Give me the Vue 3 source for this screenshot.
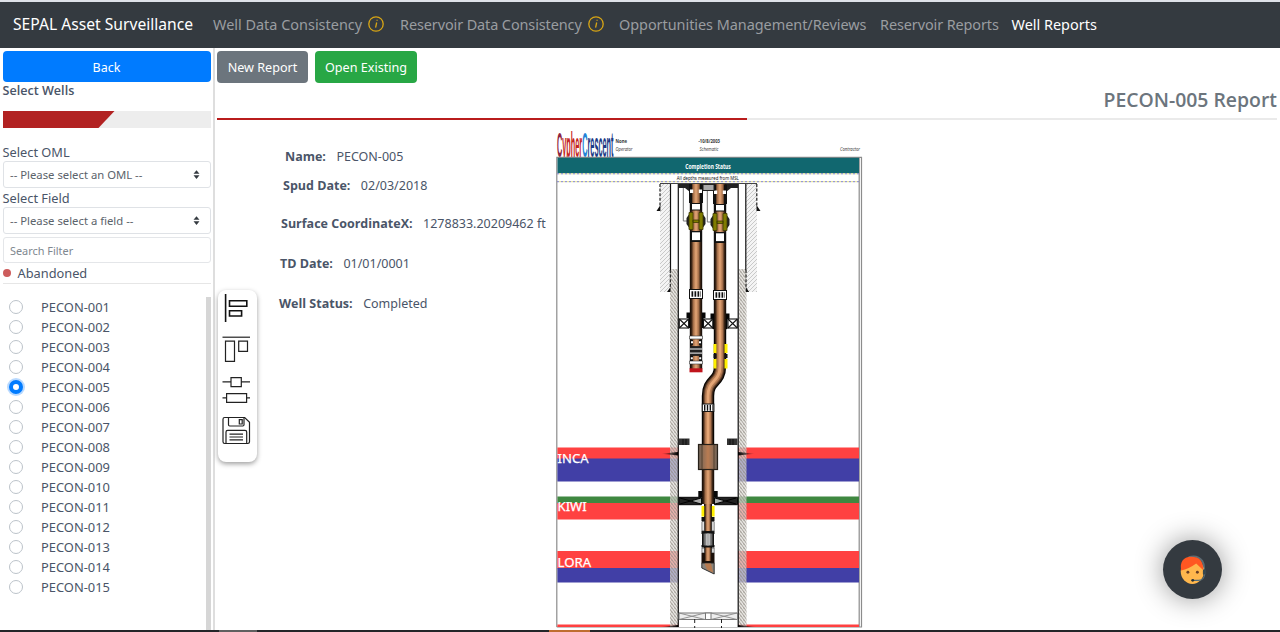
<script setup>
const wells = Array.from({ length: 15 }, (_, i) => 'PECON-' + String(i + 1).padStart(3, '0'))
const selected = 'PECON-005'
const details = [
  { k: 'name', label: 'Name:', value: 'PECON-005' },
  { k: 'spud', label: 'Spud Date:', value: '02/03/2018' },
  { k: 'coord', label: 'Surface CoordinateX:', value: '1278833.20209462 ft' },
  { k: 'td', label: 'TD Date:', value: '01/01/0001' },
  { k: 'status', label: 'Well Status:', value: 'Completed' }
]
const bands = [
  { y: 447.5, h: 11.5, c: '#ff4141' },
  { y: 458.5, h: 23, c: '#413fa6' },
  { y: 496.5, h: 7, c: '#3f8840' },
  { y: 503, h: 16.5, c: '#ff4141' },
  { y: 551, h: 17.5, c: '#ff4141' },
  { y: 568, h: 14.5, c: '#413fa6' },
  { y: 624.5, h: 2.5, c: '#ff4141' }
]
const crossBoxes = [679.3, 703.5, 728]
const strings = [{ x: 696, dy: 0 }, { x: 720, dy: 1 }]
</script>

<template>
  <div class="page">
    <nav class="nav">
      <span class="brand">SEPAL Asset Surveillance</span>
      <span class="link l1">Well Data Consistency</span>
      <svg class="info" viewBox="0 0 16 16"><circle cx="8" cy="8" r="7.2" /><path d="M8.7 6.5 7.6 11.6" /><path d="M9.1 3.8v1" /></svg>
      <span class="link l2">Reservoir Data Consistency</span>
      <svg class="info" viewBox="0 0 16 16"><circle cx="8" cy="8" r="7.2" /><path d="M8.7 6.5 7.6 11.6" /><path d="M9.1 3.8v1" /></svg>
      <span class="link l3">Opportunities Management/Reviews</span>
      <span class="link l4">Reservoir Reports</span>
      <span class="link active">Well Reports</span>
    </nav>

    <div class="body">
      <aside class="side">
        <button class="back">Back</button>
        <div class="heading">Select Wells</div>
        <div class="bar"><div class="fill"></div></div>
        <label class="lbl">Select OML</label>
        <div class="select">-- Please select an OML --
          <svg viewBox="0 0 8 10"><path d="M4 0 7.4 4.2H.6zM4 10 .6 5.8h6.8z" /></svg>
        </div>
        <label class="lbl two">Select Field</label>
        <div class="select">-- Please select a field --
          <svg viewBox="0 0 8 10"><path d="M4 0 7.4 4.2H.6zM4 10 .6 5.8h6.8z" /></svg>
        </div>
        <div class="search">Search Filter</div>
        <div class="legend"><i></i>Abandoned</div>
        <div class="list">
          <div v-for="w in wells" :key="w" class="well">
            <span class="radio" :class="{ on: w === selected }"></span>{{ w }}
          </div>
        </div>
      </aside>

      <main class="main">
        <div class="buttons">
          <button class="btn gray">New Report</button>
          <button class="btn green">Open Existing</button>
        </div>
        <h1 class="title">PECON-005 Report</h1>
        <div class="rule"><div></div></div>
        <div class="report">
          <div class="details">
            <div v-for="d in details" :key="d.k" class="row" :class="d.k">
              <b>{{ d.label }}</b><span>{{ d.value }}</span>
            </div>
          </div>

          <svg class="schematic" viewBox="555 128 308 501">
            <defs>
              <linearGradient id="pipe" x1="0" x2="1" y1="0" y2="0">
                <stop offset="0" stop-color="#0c0704" /><stop offset=".14" stop-color="#3a2415" />
                <stop offset=".3" stop-color="#a8724c" /><stop offset=".5" stop-color="#e5a676" />
                <stop offset=".7" stop-color="#a8724c" /><stop offset=".86" stop-color="#3a2415" />
                <stop offset="1" stop-color="#0c0704" />
              </linearGradient>
              <linearGradient id="steel" x1="0" x2="1" y1="0" y2="0">
                <stop offset="0" stop-color="#000" /><stop offset=".25" stop-color="#777" />
                <stop offset=".5" stop-color="#fff" /><stop offset=".75" stop-color="#777" />
                <stop offset="1" stop-color="#000" />
              </linearGradient>
              <linearGradient id="block" x1="0" x2="1" y1="0" y2="0">
                <stop offset="0" stop-color="#6d6258" /><stop offset=".5" stop-color="#b97c52" />
                <stop offset="1" stop-color="#6d6258" />
              </linearGradient>
              <linearGradient id="spikeL"><stop offset="0" stop-color="#000" stop-opacity="0" /><stop offset="1" stop-color="#000" /></linearGradient>
              <linearGradient id="spikeR"><stop offset="0" stop-color="#000" /><stop offset="1" stop-color="#000" stop-opacity="0" /></linearGradient>
              <pattern id="cement" width="4" height="4" patternUnits="userSpaceOnUse">
                <rect width="4" height="4" fill="#f4f4f4" />
                <path d="M-1 5 5-1M-1 1 1-1M3 5 5 3" stroke="#c4c4c4" stroke-width=".9" />
              </pattern>
              <pattern id="cement2" width="3" height="4" patternUnits="userSpaceOnUse">
                <rect width="3" height="4" fill="#dedbd6" fill-opacity=".72" />
                <path d="M0 0 3 4M-1 2.5 1 5M2 -1 4 2" stroke="#918b84" stroke-width=".8" />
              </pattern>
            </defs>

            <text x="557" y="157" class="logo" textLength="56.5" lengthAdjust="spacingAndGlyphs"><tspan fill="#8e2440">C</tspan><tspan fill="#c4261d">ypher</tspan><tspan fill="#2383d6">C</tspan><tspan fill="#1c3a86">rescent</tspan></text>
            <text x="615.5" y="142.5" class="strong" textLength="11.5" lengthAdjust="spacingAndGlyphs">None</text>
            <text x="615.5" y="151" class="em" textLength="17" lengthAdjust="spacingAndGlyphs">Operator</text>
            <text x="698.5" y="142.5" class="strong" textLength="21.5" lengthAdjust="spacingAndGlyphs">-10/8/2003</text>
            <text x="699.5" y="151" class="em" textLength="19" lengthAdjust="spacingAndGlyphs">Schematic</text>
            <text x="840" y="151" class="em" textLength="20" lengthAdjust="spacingAndGlyphs">Contractor</text>

            <rect x="557" y="157.8" width="302" height="25" fill="#fff" />
            <path d="M556.8 627V157.3H861.5V627H556.8M859.2 158V627" fill="none" stroke="#8c8c8c" stroke-width="1.2" />
            <rect x="557.5" y="157.8" width="301.5" height="15.4" fill="#11676f" />
            <g fill="none" stroke-width="1">
              <path d="M557 173.8H859M557 181.7H859" stroke="#8080c8" stroke-dasharray="2 2" />
              <path d="M559 173.8H859M559 181.7H859" stroke="#e4e48c" stroke-dasharray="2 2" />
            </g>
            <text x="685.3" y="168.6" font-size="6.4" font-weight="700" fill="#fff" textLength="45.5" lengthAdjust="spacingAndGlyphs">Completion Status</text>
            <text x="676.8" y="180.4" font-size="5.8" fill="#111" textLength="62" lengthAdjust="spacingAndGlyphs">All depths measured from MSL</text>

            <rect v-for="b in bands" :key="b.y" x="557.4" :y="b.y" width="301.6" :height="b.h" :fill="b.c" />
            <rect x="678.5" y="183" width="59.5" height="444" fill="#fff" />
            <g class="zone">
              <text x="557.6" y="462.8" textLength="31" lengthAdjust="spacingAndGlyphs">INCA</text>
              <text x="557.6" y="511.3" textLength="29" lengthAdjust="spacingAndGlyphs">KIWI</text>
              <text x="557.6" y="566.8" textLength="33.5" lengthAdjust="spacingAndGlyphs">LORA</text>
            </g>

            <!-- casing strings and cement -->
            <path d="M660 184H670V292H660zM746 184H757V292H746z" fill="url(#cement)" />
            <path d="M670 269H678V627H670zM738.5 269H746.5V627H738.5z" fill="url(#cement2)" />
            <path d="M660 183.5H757" stroke="#444" stroke-width="1.2" fill="none" />
            <path d="M660 184V206M756.8 184V206M670.3 270V288M746 270V288" stroke="#222" stroke-width="1.2" stroke-dasharray="3 1.6" fill="none" />
            <path d="M670.5 184V270M745.8 184V270M678.3 184V627M738.2 184V627" stroke="#111" stroke-width="1.2" fill="none" />
            <path d="M660.4 205V211H656.5zM756.5 205V211H760.5zM670.5 287V292H667zM745.8 287V292H749.2z" fill="#111" />
            <path d="M661 453.8 678 452V455.5z" fill="url(#spikeL)" /><path d="M755 453.8 738 452V455.5z" fill="url(#spikeR)" />
            <path d="M660 627H678V625z" fill="url(#spikeL)" /><path d="M757 627H738V625z" fill="url(#spikeR)" />

            <!-- hanger -->
            <path d="M678 184H690V192L685 188H678zM726 184H738V188H731L726 192z" fill="#222" />
            <path d="M683.3 188V221H687M707.3 191V222H712" fill="none" stroke="#777" />

            <!-- tubing -->
            <g fill="none" stroke-linejoin="round">
              <path d="M720 318V366C720 383 708 379 708 396V444" stroke="#080503" stroke-width="12.4" />
              <path d="M720 318V366C720 383 708 379 708 396V444" stroke="#3d2616" stroke-width="10" />
              <path d="M720 318V366C720 383 708 379 708 396V444" stroke="#80563a" stroke-width="7.8" />
              <path d="M720 318V366C720 383 708 379 708 396V444" stroke="#b77d54" stroke-width="5.8" />
              <path d="M720 318V366C720 383 708 379 708 396V444" stroke="#e5a676" stroke-width="2.8" />
            </g>
            <rect x="689.8" y="184" width="12.4" height="185" fill="url(#pipe)" />
            <rect x="713.8" y="184" width="12.4" height="146" fill="url(#pipe)" />

            <g v-for="s in strings" :key="s.x" :transform="`translate(${s.x} ${s.dy})`">
              <path d="M-7 184H-4V203H-7zM7 184H4V203H7z" fill="#111" />
              <path d="M-6 189.5H-2.8V193H-6zM2.8 189.5H6V193H2.8z" fill="#fff" />
              <rect x="-6" y="203" width="12" height="7.5" fill="#111" /><rect x="-4" y="204" width="8" height="5.5" fill="#fff" />
              <path d="M-6 213-9.5 218V224L-6 229zM6 213 9.5 218V224L6 229z" fill="#222" />
              <path d="M-7 212.5H-3V229.5H-7zM3 212.5H7V229.5H3zM-3 220H3V222.5H-3z" fill="#807c00" stroke="#3d3b00" stroke-width=".8" />
              <rect x="-6" y="231" width="12" height="11" fill="#111" /><rect x="-4" y="232.3" width="8" height="7.8" fill="#fff" />
              <rect x="-6.5" y="289.5" width="13" height="9" fill="#fff" stroke="#111" />
              <path d="M-4.5 294H5" stroke="#111" stroke-width="5.5" stroke-dasharray="1.7 1.3" />
              <path d="M-9.5 312.5H-6V328H-7.5V318H-9.5zM9.5 312.5H6V328H7.5V318H9.5z" fill="#050505" />
            </g>
            <rect x="703" y="184.5" width="11" height="6" fill="#aaa" stroke="#222" />
            <g v-for="x in crossBoxes" :key="x" fill="none" stroke="#151515" stroke-width="1.1">
              <rect :x="x" y="319" width="9.3" height="9" fill="#fff" /><path :d="`M${x} 319l9.3 9M${x} 328l9.3-9`" />
            </g>

            <!-- short string tail -->
            <path d="M689.5 336H702.5V339H689.5zM689.5 361H702.5V364H689.5z" fill="#fff" stroke="#333" stroke-width=".6" />
            <path d="M690 346.5H702V355.5H690z" fill="#555" />
            <path d="M690 347H702M690 351H702M690 355H702" stroke="#111" stroke-width="1.5" /><path d="M690 349H702M690 353.2H702" stroke="#c8c8c8" stroke-width="1" />
            <path d="M690 340H693V345H690zM699 340H702V345H699zM690 356H693V361H690zM699 356H702V361H699z" fill="#111" />
            <path d="M691 341.3h2v2h-2zM699 341.3h2v2h-2zM690.8 357.3h2v2h-2zM699.2 357.3h2v2h-2z" fill="#fff" />
            <rect x="689.5" y="368.3" width="13" height="4" fill="#c0141c" />

            <!-- long string below packer -->
            <path d="M713.5 344h3v9h-3zM724.5 344h3v9h-3zM713.5 359h3v9.5h-3zM724.5 359h3v9.5h-3z" fill="#ffef00" />
            <path d="M713.5 354h3v4h-3zM724.5 354h3v4h-3z" fill="#111" />
            <rect x="702.3" y="404" width="11.5" height="7.5" fill="#fff" stroke="#111" />
            <path d="M704 407.8H713" stroke="#111" stroke-width="6" stroke-dasharray="1.4 1.4" />
            <rect x="701.8" y="444" width="12.4" height="60" fill="url(#pipe)" />
            <rect x="698.5" y="444.5" width="19" height="25" fill="url(#block)" stroke="#262019" stroke-width="1.2" /><path d="M702 445V469M714 445V469" stroke="#50402f" />
            <path d="M679 438.5h10.5v6.5H679zM727 438.5h10.5v6.5H727z" fill="#333" /><path d="M683 439v6M686 439v6M730 439v6M733 439v6" stroke="#111" />
            <path d="M698.3 491h3.7v6h-3.7zM714 491h3.7v6H714z" fill="#080808" />
            <path d="M679 497.3H701.5V504.7H679zM714.5 497.3H737.5V504.7H714.5z" fill="#222" stroke="#080808" />
            <path d="M690 501 701 498V504zM726 501 715 498V504z" fill="#aaa" /><path d="M680 498 701 504M680 504 701 498M715 498 736 504M715 504 736 498" stroke="#000" />
            <rect x="704" y="504" width="8" height="60" fill="url(#pipe)" />
            <path d="M701.5 506h2.8v10.5h-2.8zM711.8 506h2.8v10.5h-2.8z" fill="#ffef00" />
            <path d="M701.5 517h3v4h-3zM711.5 517h3v4h-3zM701.5 531h13v3h-13zM701.5 545h13v2.5h-13z" fill="#111" />
            <path d="M702 521.5h2.3v9.5H702zM711.8 521.5h2.3v9.5h-2.3zM702 548h2.3v5H702zM711.8 548h2.3v5h-2.3z" fill="#fff" stroke="#333" stroke-width=".7" />
            <rect x="702" y="533.5" width="12" height="12" fill="url(#steel)" /><path d="M705 534V545M708 534V545M711 534V545" stroke="#777" />
            <path d="M701.5 553h3v9h-3zM711.5 553h3v9h-3zM701.5 561h13v2h-13z" fill="#1a0f08" />
            <path d="M701.8 563H714.2V574L701.8 568z" fill="#8a847c" stroke="#222" stroke-width=".9" /><path d="M704.5 563.5H711L713 572.5 707 569.5z" fill="#b87a4f" />

            <!-- bottom packer -->
            <path d="M679 613H737.5V619.5H679z" fill="#eee" stroke="#777" /><path d="M679 613 705 619.5M679 619.5 705 613M711 613 737 619.5M711 619.5 737 613" stroke="#888" stroke-width=".9" />
            <rect x="705.5" y="613" width="5.5" height="6.5" fill="#fff" stroke="#777" /><path d="M694.7 619V628M721.5 619V628" stroke="#222" stroke-dasharray="4 3" />
          </svg>
        </div>
      </main>
    </div>

    <div class="tools">
      <svg viewBox="0 0 39 172" fill="none" stroke="#222">
        <g stroke-width="1.6" stroke="#111"><path d="M7.6 4V32" /><path d="M11.5 10.8H28.8V16.2H11.5zM11.5 20.8H23.6V26H11.5z" /></g>
        <g stroke-width="1.2"><path d="M4.5 47.2H32" /><path d="M7.5 51.2H16.5V71.3H7.5zM20.7 51.2H29.5V61.4H20.7z" />
          <path d="M4.5 91.8H13M23.3 91.8H32M13 87.6H23.3V96.6H13zM4.5 107.8H8.6M28.6 107.8H32M8.6 103.6H28.6V112.4H8.6z" />
          <path d="M6.7 127.5H26.7L31.5 132.2V151.8Q31.5 153.5 29.8 153.5H6.7Q5 153.5 5 151.8V129.2Q5 127.5 6.7 127.5z" />
          <path d="M10.5 127.5V134.8Q10.5 136 11.7 136H24.8Q26 136 26 134.8V127.5M21.3 129.6H24.2V134H21.3zM8 153.5V142Q8 140.3 9.7 140.3H27Q28.7 140.3 28.7 142V153.5" />
          <path d="M11.5 144.2H25M11.5 147H25M11.5 149.8H25" /></g>
      </svg>
    </div>

    <button class="chat" aria-label="Support">
      <svg viewBox="0 0 30 32">
        <path d="M10 2.3Q19-.5 24 6Q26.3 9.5 25.7 16" fill="none" stroke="#5c6b73" stroke-width="2" />
        <ellipse cx="13.8" cy="17" rx="12" ry="13" fill="#ffb74d" />
        <path d="M2.2 16Q0 2.5 12.5 1.8Q25.5 1.8 24.9 15.5L17.8 8.8Q10 14.5 2.2 16z" fill="#ff5722" />
        <circle cx="9.2" cy="17.8" r="1.5" fill="#6b3f24" /><circle cx="19" cy="17.8" r="1.5" fill="#6b3f24" />
        <rect x="24.7" y="14.8" width="3.4" height="6" rx="1.5" fill="#37474f" />
        <path d="M26.5 20Q25.8 26.2 20 26.2H14.5" fill="none" stroke="#546e7a" stroke-width="1.1" /><circle cx="14.2" cy="26.2" r="1.5" fill="#263238" />
      </svg>
    </button>
    <div class="edge"><i class="e1"></i><i class="e2"></i></div>
  </div>
</template>

<style>
body { overflow: hidden; background: #fff; }
</style>

<style scoped>
* { box-sizing: border-box; }
.page { position: relative; width: 1280px; height: 632px; overflow: hidden; display: flex; flex-direction: column; background: #fff; font-family: "Noto Sans", "Open Sans", sans-serif; color: #4a5568; }
.nav { flex: none; height: 48px; border-top: 2px solid #dee2e8; background: #343a40; padding: 0 0 2px 13px; display: flex; align-items: center; white-space: nowrap; color: #9a9da0; font-size: 14.45px; }
.brand { width: 200px; color: #fff; font-size: 15.65px; }
.l1 { width: 155px; } .l2 { width: 188px; margin-left: 16px; letter-spacing: -.1px; } .l3 { width: 261px; margin-left: 15px; letter-spacing: -.04px; } .l4 { width: 131.5px; letter-spacing: -.1px; }
.active { color: #fff; }
.info { width: 16px; height: 16px; fill: none; stroke: #d8a514; stroke-width: 1.3; }
.body { flex: 1; display: flex; min-height: 0; }
.side { width: 215px; flex: none; border-right: 2px solid #dedede; padding: 3px 3px 0 2.5px; display: flex; flex-direction: column; font-size: 12.8px; }
button { border: 0; font-family: inherit; color: #fff; padding: 0; }
.back { width: 208px; height: 31px; flex: none; border-radius: 4px; background: #007bff; font-size: 12.5px; padding-top: 1px; }
.heading { height: 29px; font: 600 12.6px/18px "Open Sans", sans-serif; }
.bar { width: 208px; height: 17px; background: #ededed; flex: none; }
.fill { width: 112px; height: 17px; background: #b22222; clip-path: polygon(0 0, 100% 0, 96px 100%, 0 100%); }
.lbl { height: 33px; padding-top: 15px; line-height: 18px; }
.lbl.two { height: 19px; padding-top: 1px; }
.select, .search { width: 208px; height: 27px; flex: none; border: 1px solid #dfe2e6; border-radius: 3px; padding: 0 9.5px 0 6.5px; display: flex; align-items: center; justify-content: space-between; font-size: 11.3px; color: #5b636b; white-space: nowrap; }
.select svg { width: 7px; height: 9px; fill: #343a40; }
.search { margin-top: 3px; height: 26px; border-color: #e4e6e9; font-size: 10.9px; color: #808890; }
.legend { height: 21px; width: 208px; flex: none; display: flex; align-items: center; gap: 7px; border-bottom: 1px solid #e6e6e6; font-size: 12.8px; }
.legend i { width: 8px; height: 8px; border-radius: 50%; background: #cd5c5c; }
.list { margin-top: 13px; width: 208px; flex: 1; border-right: 5px solid #d6d6d6; padding-left: 6.5px; }
.well { height: 20.03px; display: flex; align-items: center; line-height: 20px; font-size: 12.9px; }
.radio { width: 14px; height: 14px; border: 1px solid #bcc3ca; border-radius: 50%; margin-right: 18px; background: #fff; }
.radio.on { border: 4.5px solid #007bff; box-shadow: 0 0 0 2px #b8d9ff; }
.main { flex: 1; padding: 3px 3px 0 2px; display: flex; flex-direction: column; }
.buttons { display: flex; gap: 7px; height: 33px; flex: none; }
.btn { height: 32px; border-radius: 4px; font-size: 12.6px; white-space: nowrap; padding-top: 1px; }
.gray { width: 91px; background: #6c757d; } .green { width: 102px; background: #28a745; }
.title { margin: 0; height: 34px; text-align: right; font: 600 19.4px/31px "Open Sans", sans-serif; color: #6c757d; }
.rule { height: 2px; background: #eaeaea; } .rule div { width: 530px; height: 2px; background: #b91c1c; }
.report { display: flex; }
.details { width: 338px; flex: none; padding: 26px 0 0 62px; font-size: 12.5px; white-space: nowrap; }
.row { display: flex; gap: 10.5px; line-height: 21px; height: 40px; }
.row b { font: 700 12.5px/21px "Open Sans", sans-serif; }
.name { padding-left: 6px; height: 29px; } .spud { padding-left: 4px; height: 38px; } .coord { padding-left: 2px; } .td { padding-left: 1px; }
.schematic { width: 308px; height: 501px; margin-top: 8px; flex: none; display: block; overflow: visible; font-family: "Noto Sans", sans-serif; }
.strong { font-size: 5.5px; font-weight: 700; fill: #333; } .em { font-size: 5.6px; font-style: italic; fill: #444; }
.logo { font-family: "Liberation Sans", sans-serif; font-weight: 700; font-size: 35px; }
.zone { font-size: 12.5px; fill: #fff; stroke: #fff; stroke-width: .25px; }
.tools { position: absolute; left: 218px; top: 290px; width: 39px; height: 172px; border-radius: 8px; background: #fff; box-shadow: 0 2px 5px rgba(0, 0, 0, .38); }
.tools svg { display: block; width: 39px; height: 172px; margin-left: -.4px; }
.chat { position: absolute; left: 1163px; top: 539.5px; width: 59px; height: 59px; border-radius: 50%; background: #343a40; display: flex; align-items: center; justify-content: center; box-shadow: 0 0 28px rgba(0, 0, 0, .42); }
.chat svg { width: 29px; height: 31px; margin: 2px 0 0 2px; }
.edge { position: absolute; left: 0; right: 0; bottom: 0; height: 2px; background: #242629; display: flex; }
.e1 { width: 38px; margin-left: 219px; background: #606060; } .e2 { width: 41px; margin-left: 292px; background: #bf6d2f; }
</style>
